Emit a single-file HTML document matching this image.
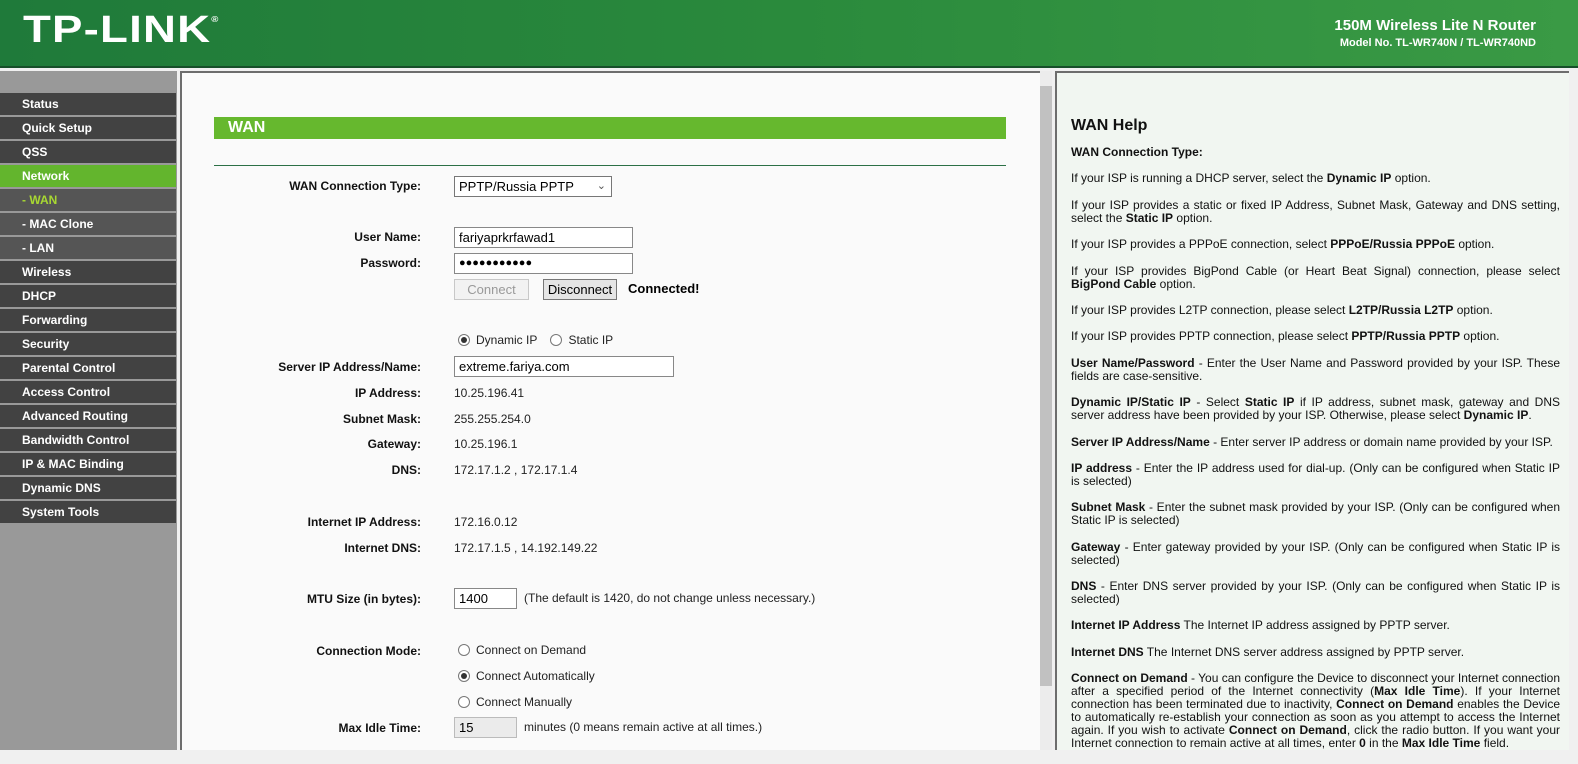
<!DOCTYPE html>
<html><head><meta charset="utf-8"><style>
*{margin:0;padding:0;box-sizing:border-box}
body{width:1578px;height:750px;overflow:hidden;background:#f0f0f0;font-family:"Liberation Sans",Arial,sans-serif;font-size:12px;color:#000;position:relative}
#hdr{position:absolute;left:0;top:0;width:1578px;height:66px;background:linear-gradient(90deg,#1f7a3a 0%,#2a8a3c 50%,#3a9a45 100%)}
#hdrline{position:absolute;left:0;top:66px;width:1578px;height:2px;background:#174f2a}
#logo{position:absolute;left:23px;top:9px;color:#fff;font-weight:bold;font-size:38px;letter-spacing:1px;font-family:"Liberation Sans",sans-serif;transform:scaleX(1.2);transform-origin:left}
#logo sup{font-size:8px;vertical-align:top;position:relative;top:6px}
#prod{position:absolute;right:42px;top:17px;color:#fff;text-align:right;font-weight:bold}
#prod .a{font-size:15px}
#prod .b{font-size:11px;margin-top:3px}
#nav{position:absolute;left:0;top:71px;width:177px;height:679px;background:#999}
.it{position:absolute;left:0;width:176px;height:22px;background:#424242;color:#fff;font-weight:bold;font-size:12px;line-height:22px;padding-left:22px}
.it.g{background:#63b52d}
.it.s{background:#555}
.it.s.a{color:#a8d832}
#main{position:absolute;left:180px;top:71px;width:860px;height:679px;background:#fafafa;border-left:2px solid #6d6d6d;border-top:2px solid #6d6d6d}
#sb{position:absolute;left:1040px;top:71px;width:12px;height:679px;background:#ececec}
#th{position:absolute;left:1040px;top:86px;width:12px;height:600px;background:#c1c1c1}
#help{position:absolute;left:1055px;top:71px;width:514px;height:679px;background:#f1f6f1;border-left:2px solid #6d6d6d;border-top:2px solid #6d6d6d}
#rb{position:absolute;left:1569px;top:71px;width:9px;height:679px;background:#f0f0f0}
.bar{position:absolute;left:214px;top:117px;width:792px;height:22px;background:#66b82e;color:#fff;font-weight:bold;font-size:16px;line-height:22px;padding-left:14px}
.hl{position:absolute;left:214px;top:165px;width:792px;height:1px;background:#2c7046}
.lb{position:absolute;width:240px;left:181px;text-align:right;font-weight:bold;font-size:12px;color:#111}
.v{position:absolute;left:454px;font-size:12px;color:#222}
.inp{position:absolute;background:#fff;border:1px solid #888;height:21px;font-size:13px;line-height:19px;padding-left:4px}
.rad{display:inline-block;width:12px;height:12px;border:1px solid #777;border-radius:50%;background:#fff;vertical-align:-2px;margin-right:6px;position:relative}
.rad.on::after{content:"";position:absolute;left:2px;top:2px;width:6px;height:6px;border-radius:50%;background:#333}
#ht{position:absolute;left:1071px;top:117px;width:489px;font-size:12px;line-height:13px;color:#111;text-align:justify}
#ht h2{font-size:16px;margin-bottom:11px;line-height:18px}
#ht p{margin-bottom:13.4px}
</style></head><body>
<div id="hdr"></div><div id="hdrline"></div>
<div id="logo">TP-LINK<sup>®</sup></div>
<div id="prod"><div class="a">150M Wireless Lite N Router</div><div class="b">Model No. TL-WR740N / TL-WR740ND</div></div>

<div id="nav">
<div class="it" style="top:22px">Status</div>
<div class="it" style="top:46px">Quick Setup</div>
<div class="it" style="top:70px">QSS</div>
<div class="it g" style="top:94px">Network</div>
<div class="it s a" style="top:118px">- WAN</div>
<div class="it s" style="top:142px">- MAC Clone</div>
<div class="it s" style="top:166px">- LAN</div>
<div class="it" style="top:190px">Wireless</div>
<div class="it" style="top:214px">DHCP</div>
<div class="it" style="top:238px">Forwarding</div>
<div class="it" style="top:262px">Security</div>
<div class="it" style="top:286px">Parental Control</div>
<div class="it" style="top:310px">Access Control</div>
<div class="it" style="top:334px">Advanced Routing</div>
<div class="it" style="top:358px">Bandwidth Control</div>
<div class="it" style="top:382px">IP &amp; MAC Binding</div>
<div class="it" style="top:406px">Dynamic DNS</div>
<div class="it" style="top:430px">System Tools</div>
</div>

<div id="main"></div>
<div class="bar">WAN</div>
<div class="hl"></div>

<div class="lb" style="top:179px">WAN Connection Type:</div>
<div class="inp" style="left:454px;top:176px;width:158px;border-color:#777">PPTP/Russia PPTP<span style="position:absolute;right:5px;top:0;font-size:11px;color:#555">&#8964;</span></div>

<div class="lb" style="top:230px">User Name:</div>
<div class="inp" style="left:454px;top:227px;width:179px">fariyaprkrfawad1</div>
<div class="lb" style="top:256px">Password:</div>
<div class="inp" style="left:454px;top:253px;width:179px;font-size:11px;letter-spacing:0px">●●●●●●●●●●●</div>
<div style="position:absolute;left:454px;top:279px;width:75px;height:21px;background:#f2f2f2;border:1px solid #c8c8c8;color:#999;font-size:13px;text-align:center;line-height:19px">Connect</div>
<div style="position:absolute;left:543px;top:279px;width:74px;height:21px;background:#e5e5e5;border:1px solid #777;color:#000;font-size:13px;text-align:center;line-height:19px;overflow:hidden;white-space:nowrap">Disconnect</div>
<div style="position:absolute;left:628px;top:281px;font-weight:bold;font-size:13px">Connected!</div>

<div class="v" style="left:458px;top:333px"><span class="rad on"></span>Dynamic IP &nbsp;&nbsp;&nbsp;<span class="rad"></span>Static IP</div>
<div class="lb" style="top:360px">Server IP Address/Name:</div>
<div class="inp" style="left:454px;top:356px;width:220px">extreme.fariya.com</div>

<div class="lb" style="top:386px">IP Address:</div><div class="v" style="top:386px">10.25.196.41</div>
<div class="lb" style="top:412px">Subnet Mask:</div><div class="v" style="top:412px">255.255.254.0</div>
<div class="lb" style="top:437px">Gateway:</div><div class="v" style="top:437px">10.25.196.1</div>
<div class="lb" style="top:463px">DNS:</div><div class="v" style="top:463px">172.17.1.2 , 172.17.1.4</div>
<div class="lb" style="top:515px">Internet IP Address:</div><div class="v" style="top:515px">172.16.0.12</div>
<div class="lb" style="top:541px">Internet DNS:</div><div class="v" style="top:541px">172.17.1.5 , 14.192.149.22</div>

<div class="lb" style="top:592px">MTU Size (in bytes):</div>
<div class="inp" style="left:454px;top:588px;width:63px">1400</div>
<div class="v" style="left:524px;top:591px">(The default is 1420, do not change unless necessary.)</div>

<div class="lb" style="top:644px">Connection Mode:</div>
<div class="v" style="left:458px;top:643px"><span class="rad"></span>Connect on Demand</div>
<div class="v" style="left:458px;top:669px"><span class="rad on"></span>Connect Automatically</div>
<div class="v" style="left:458px;top:695px"><span class="rad"></span>Connect Manually</div>
<div class="lb" style="top:721px">Max Idle Time:</div>
<div class="inp" style="left:454px;top:717px;width:63px;background:#ebebeb;border-color:#bbb">15</div>
<div class="v" style="left:524px;top:720px">minutes (0 means remain active at all times.)</div>

<div id="sb"></div><div id="th"></div>
<div id="help"></div><div id="rb"></div>
<div id="ht">
<h2>WAN Help</h2>
<p><b>WAN Connection Type:</b></p>
<p>If your ISP is running a DHCP server, select the <b>Dynamic IP</b> option.</p>
<p>If your ISP provides a static or fixed IP Address, Subnet Mask, Gateway and DNS setting, select the <b>Static IP</b> option.</p>
<p>If your ISP provides a PPPoE connection, select <b>PPPoE/Russia PPPoE</b> option.</p>
<p>If your ISP provides BigPond Cable (or Heart Beat Signal) connection, please select <b>BigPond Cable</b> option.</p>
<p>If your ISP provides L2TP connection, please select <b>L2TP/Russia L2TP</b> option.</p>
<p>If your ISP provides PPTP connection, please select <b>PPTP/Russia PPTP</b> option.</p>
<p><b>User Name/Password</b> - Enter the User Name and Password provided by your ISP. These fields are case-sensitive.</p>
<p><b>Dynamic IP/Static IP</b> - Select <b>Static IP</b> if IP address, subnet mask, gateway and DNS server address have been provided by your ISP. Otherwise, please select <b>Dynamic IP</b>.</p>
<p><b>Server IP Address/Name</b> - Enter server IP address or domain name provided by your ISP.</p>
<p><b>IP address</b> - Enter the IP address used for dial-up. (Only can be configured when Static IP is selected)</p>
<p><b>Subnet Mask</b> - Enter the subnet mask provided by your ISP. (Only can be configured when Static IP is selected)</p>
<p><b>Gateway</b> - Enter gateway provided by your ISP. (Only can be configured when Static IP is selected)</p>
<p><b>DNS</b> - Enter DNS server provided by your ISP. (Only can be configured when Static IP is selected)</p>
<p><b>Internet IP Address</b> The Internet IP address assigned by PPTP server.</p>
<p><b>Internet DNS</b> The Internet DNS server address assigned by PPTP server.</p>
<p><b>Connect on Demand</b> - You can configure the Device to disconnect your Internet connection after a specified period of the Internet connectivity (<b>Max Idle Time</b>). If your Internet connection has been terminated due to inactivity, <b>Connect on Demand</b> enables the Device to automatically re-establish your connection as soon as you attempt to access the Internet again. If you wish to activate <b>Connect on Demand</b>, click the radio button. If you want your Internet connection to remain active at all times, enter <b>0</b> in the <b>Max Idle Time</b> field.</p>
</div>
</body></html>
